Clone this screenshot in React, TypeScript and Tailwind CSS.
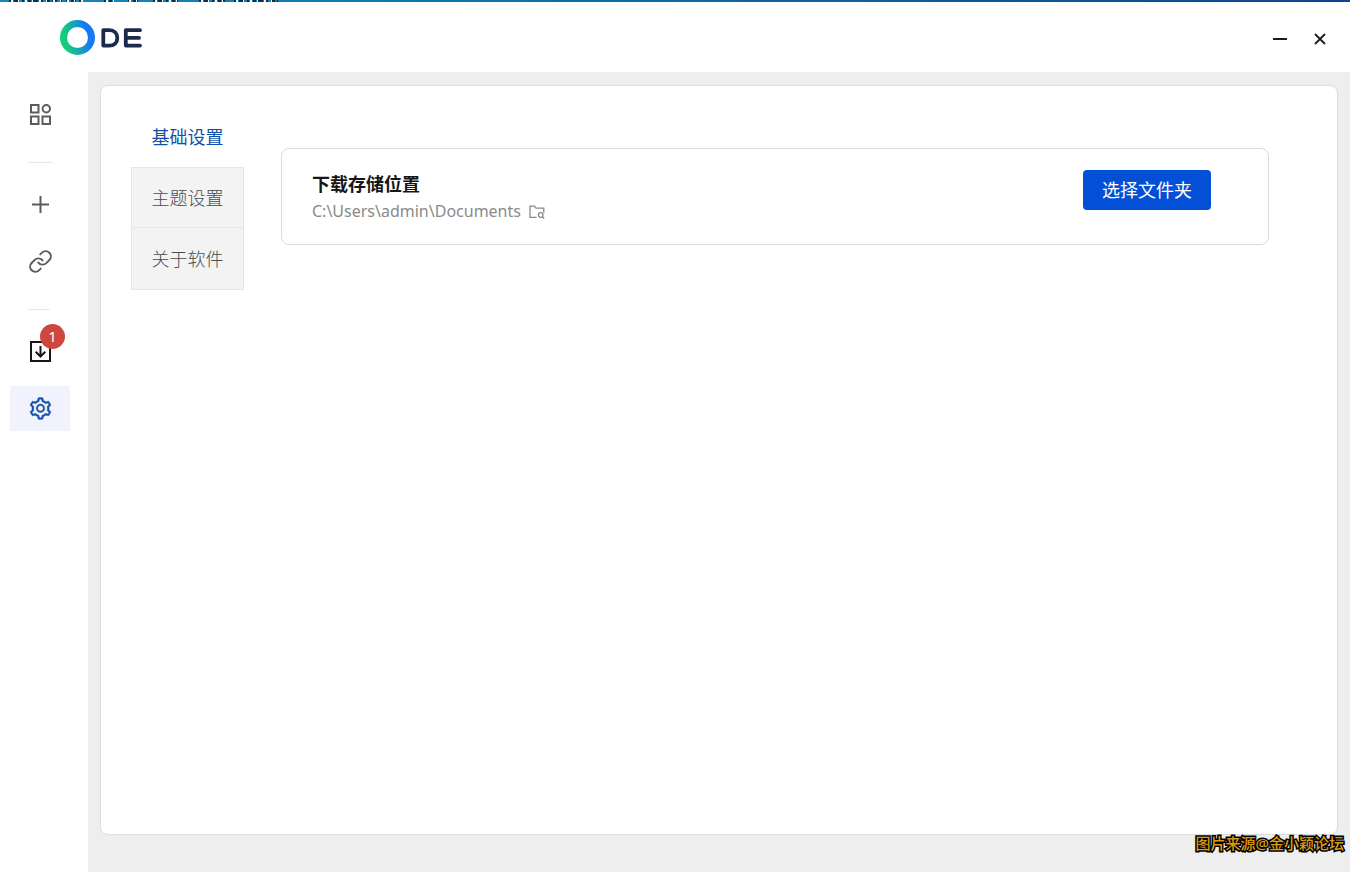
import type { ReactNode } from "react";
import { AiOutlineSetting } from "react-icons/ai";
import { Link as LinkIcon } from "lucide-react";

const tabs = [
  { label: "主题设置", rule: true },
  { label: "关于软件", rule: false },
];

function Logo() {
  return (
    <svg width="84" height="36" viewBox="0 0 84 36" role="img" aria-label="ODE">
      <defs>
        <linearGradient id="ring" x1="0" y1="0.65" x2="1" y2="0.4">
          <stop offset="0.05" stopColor="#12d07a" />
          <stop offset="0.5" stopColor="#14a4bb" />
          <stop offset="0.85" stopColor="#1479f5" />
        </linearGradient>
      </defs>
      <circle cx="17.500" cy="18.500" r="14" fill="none" stroke="url(#ring)" strokeWidth="7" />
      <g fill="none" stroke="#1c2b4d" strokeWidth="3.800" strokeLinejoin="round" strokeLinecap="round">
        <path d="M43.300 11.200h5.800c5.200 0 8.200 3 8.200 7.700s-3 7.700-8.200 7.700h-5.800z" />
        <path d="M80 11.200H65.800v15.400H80M65.800 18.900H79" />
      </g>
    </svg>
  );
}

function WindowEdge() {
  return (
    <div className="h-[2px] bg-linear-to-r from-[#1789bd] to-[#0c4593]">
      <svg width="290" height="2" viewBox="0 0 290 2" fill="none" strokeWidth="2" aria-hidden="true" className="block">
        <path
          d="M9 1h76M104 1h8M128 1h12M153 1h25M199 1h26M234 1h44"
          stroke="#15303d"
          strokeDasharray="3 2 5 3 2 4"
        />
        <path
          d="M11 1h74M106 1h8M129 1h12M155 1h25M201 1h24M236 1h42"
          stroke="#e8f4f8"
          strokeDasharray="2 5 1 6"
        />
      </svg>
    </div>
  );
}

function SideItem({ label, active, children }: { label: string; active?: boolean; children: ReactNode }) {
  return (
    <button
      type="button"
      aria-label={label}
      className={
        active
          ? "relative flex h-[45px] w-[60px] items-center justify-center rounded-xs bg-[#f1f2fd] pl-px text-[#0f50a8]"
          : "relative flex h-[45px] w-[60px] items-center justify-center pl-px text-[#5c5c5c]"
      }
    >
      {children}
    </button>
  );
}

function Sidebar() {
  return (
    <nav className="flex w-[88px] shrink-0 flex-col pt-5 pl-[10px]">
      <SideItem label="应用">
        <svg width="21" height="21" viewBox="0 0 21 21" fill="none" stroke="currentColor" strokeWidth="2">
          <path d="M1 1h7.500v7.500H1zM1 12.500h7.500V20H1zM12.500 12.500H20V20h-7.500z" />
          <circle cx="16.300" cy="4.700" r="3.700" />
        </svg>
      </SideItem>
      <hr className="mt-[25px] ml-[18px] w-[25px] border-[#e8e8e8]" />
      <div className="mt-[19px] flex flex-col gap-3">
        <SideItem label="添加">
          <svg width="17" height="17" viewBox="0 0 17 17" fill="none" stroke="currentColor" strokeWidth="2">
            <path d="M8.500 0v17M0 8.500h17" />
          </svg>
        </SideItem>
        <SideItem label="链接">
          <LinkIcon size={25} strokeWidth={1.9} />
        </SideItem>
      </div>
      <hr className="mt-[25px] ml-[18px] w-[22px] border-[#e8e8e8]" />
      <div className="mt-[19px] flex flex-col gap-3">
        <SideItem label="下载">
          <svg width="21" height="21" viewBox="0 0 21 21" fill="none" stroke="#161616" strokeWidth="2">
            <path d="M1 1h19v19H1z" />
            <path d="M10.500 5v10.500M5.700 10.700l4.800 4.800 4.800-4.800" />
          </svg>
          <span className="absolute -top-[5px] left-[30px] flex size-[25px] items-center justify-center rounded-full bg-[#cf463c] text-[15px] text-white">
            1
          </span>
        </SideItem>
        <SideItem label="设置" active>
          <AiOutlineSetting size={25} stroke="currentColor" strokeWidth={14} />
        </SideItem>
      </div>
    </nav>
  );
}

export default function App() {
  return (
    <div className="flex min-h-screen flex-col bg-white pb-1 font-['Noto_Sans','Noto_Sans_CJK_SC',sans-serif]">
      <WindowEdge />
      <header className="flex h-[70px] items-center justify-between pr-[22px] pl-[60px]">
        <Logo />
        <div className="flex items-center gap-5 pt-1 text-[#1c1c1c]">
          <button type="button" aria-label="最小化" className="flex size-6 items-center justify-center">
            <svg width="14" height="14" viewBox="0 0 14 14" stroke="currentColor" strokeWidth="2">
              <path d="M0 7h14" />
            </svg>
          </button>
          <button type="button" aria-label="关闭" className="flex w-4 items-center justify-center">
            <svg width="12" height="12" viewBox="0 0 12 12" stroke="currentColor" strokeWidth="1.800">
              <path d="M1 1l10 10M11 1L1 11" />
            </svg>
          </button>
        </div>
      </header>
      <div className="flex grow">
        <Sidebar />
        <main className="relative flex grow flex-col bg-[#eeeeee] pt-[13px] pr-3 pb-[37px] pl-3">
          <div className="flex grow items-start rounded-lg border border-[#dcdcdc] bg-white pt-[20px] pr-[68px] pl-[30px]">
            <div role="tablist" className="flex w-[113px] shrink-0 flex-col text-lg">
              <button type="button" role="tab" aria-selected="true" className="h-[61px] text-[#0f50a8]">
                基础设置
              </button>
              <div className="flex flex-col border border-[#e6e6e6] bg-[#f3f3f3]">
                {tabs.map((t) => (
                  <button
                    key={t.label}
                    type="button"
                    role="tab"
                    aria-selected="false"
                    className={
                      t.rule
                        ? "h-[60px] border-b border-[#e6e6e6] font-light text-[#4a4a4a]"
                        : "h-[61px] font-light text-[#4a4a4a]"
                    }
                  >
                    {t.label}
                  </button>
                ))}
              </div>
            </div>
            <section className="mt-[42px] ml-[37px] flex h-[97px] grow items-start justify-between rounded-lg border border-[#dcdcdc] pt-[21px] pr-[57px] pl-[30px]">
              <div>
                <h2 className="text-lg leading-7 font-bold text-[#161616]">下载存储位置</h2>
                <p className="flex items-center gap-2 text-base leading-[26px] text-[#8a8a8a]">
                  C:\Users\admin\Documents
                  <svg width="16" height="16" viewBox="0 0 16 16" fill="none" stroke="currentColor" strokeWidth="1.300" className="mt-[2px]">
                    <path d="M7.500 13.300H1V2.200h4.500l1.500 2h7.800v4.500" />
                    <circle cx="11.700" cy="11" r="2.300" />
                    <path d="M13.400 12.700l1.800 1.800" />
                  </svg>
                </p>
              </div>
              <button type="button" className="h-10 w-32 rounded-sm bg-[#0350d6] text-lg text-white">
                选择文件夹
              </button>
            </section>
          </div>
          <p className="absolute right-[6px] bottom-[18px] text-[15px] leading-[22px] font-medium text-[#dc9a10] [-webkit-text-stroke:3px_#000] [paint-order:stroke_fill]">
            图片来源@金小颖论坛
          </p>
        </main>
      </div>
    </div>
  );
}
